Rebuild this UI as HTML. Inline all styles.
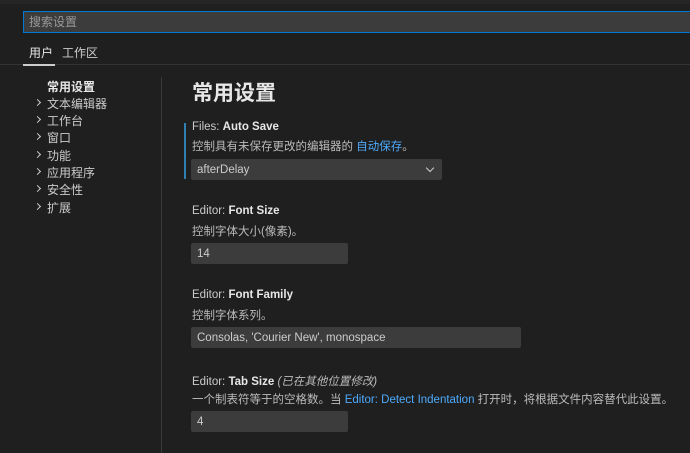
<!DOCTYPE html>
<html><head><meta charset="utf-8"><style>
*{margin:0;padding:0;box-sizing:border-box}
body{width:690px;height:453px;overflow:hidden;background:#1f1f1f;font-family:"Liberation Sans","Noto Sans CJK SC",sans-serif;font-size:12px;color:#ccc;position:relative}
.a{position:absolute;white-space:nowrap}
.search{left:23px;top:11px;width:680px;height:22px;background:#3c3c3c;border:1px solid #0078d4;color:#999;padding:2px 5px;font-size:12px;line-height:16px}
.nav{left:47px;font-size:12px;color:#ccc}
.chev{position:absolute;left:-12px;top:5px;width:5px;height:5px;border-right:1px solid #ccc;border-bottom:1px solid #ccc;transform:rotate(-45deg)}
.lbl{left:192px;font-size:11.5px;color:#ccc}
.lbl b{color:#e7e7e7}
.desc{left:192px;font-size:11.5px;color:#bbb}
.box{position:absolute;left:191px;background:#3c3c3c;border-radius:2px;color:#ccc;font-size:11.5px;padding:0 6px;height:21px;display:flex;align-items:center}
.lk{color:#4daafc}
</style></head><body>
<div class="a" style="left:0;top:0;width:690px;height:4px;background:#252525"></div>
<div class="a search">搜索设置</div>
<div class="a" style="left:29px;top:44px;color:#e7e7e7">用户</div>
<div class="a" style="left:62px;top:44px;color:#ccc">工作区</div>
<div class="a" style="left:0;top:64px;width:690px;height:1px;background:#333"></div>
<div class="a" style="left:23px;top:64px;width:32px;height:2px;background:#ccc"></div>
<div class="a" style="left:161px;top:77px;width:1px;height:376px;background:#3a3a3a"></div>
<div class="a nav" style="top:78px;font-weight:bold;color:#e7e7e7">常用设置</div>
<div class="a nav" style="top:95px"><span class="chev"></span>文本编辑器</div>
<div class="a nav" style="top:112px"><span class="chev"></span>工作台</div>
<div class="a nav" style="top:129px"><span class="chev"></span>窗口</div>
<div class="a nav" style="top:147px"><span class="chev"></span>功能</div>
<div class="a nav" style="top:164px"><span class="chev"></span>应用程序</div>
<div class="a nav" style="top:181px"><span class="chev"></span>安全性</div>
<div class="a nav" style="top:199px"><span class="chev"></span>扩展</div>
<div class="a" style="left:192px;top:77px;font-size:21px;font-weight:bold;color:#e7e7e7">常用设置</div>
<div class="a" style="left:184px;top:123px;width:2px;height:56px;background:#2f7fb0"></div>
<div class="a lbl" style="top:121px">Files: <b>Auto Save</b></div>
<div class="a desc" style="top:138px">控制具有未保存更改的编辑器的 <span class="lk">自动保存</span>。</div>
<div class="box" style="top:159px;width:251px">afterDelay<span style="position:absolute;right:9px;top:6px;width:6px;height:6px;border-right:1px solid #ccc;border-bottom:1px solid #ccc;transform:rotate(45deg)"></span></div>
<div class="a lbl" style="top:205px">Editor: <b>Font Size</b></div>
<div class="a desc" style="top:223px">控制字体大小(像素)。</div>
<div class="box" style="top:243px;width:157px">14</div>
<div class="a lbl" style="top:289px">Editor: <b>Font Family</b></div>
<div class="a desc" style="top:307px">控制字体系列。</div>
<div class="box" style="top:327px;width:330px">Consolas, 'Courier New', monospace</div>
<div class="a lbl" style="top:373px">Editor: <b>Tab Size</b> <i style="color:#bbb">(已在其他位置修改)</i></div>
<div class="a desc" style="top:391px">一个制表符等于的空格数。当 <span class="lk">Editor: Detect Indentation</span> 打开时，将根据文件内容替代此设置。</div>
<div class="box" style="top:411px;width:157px">4</div>
</body></html>
